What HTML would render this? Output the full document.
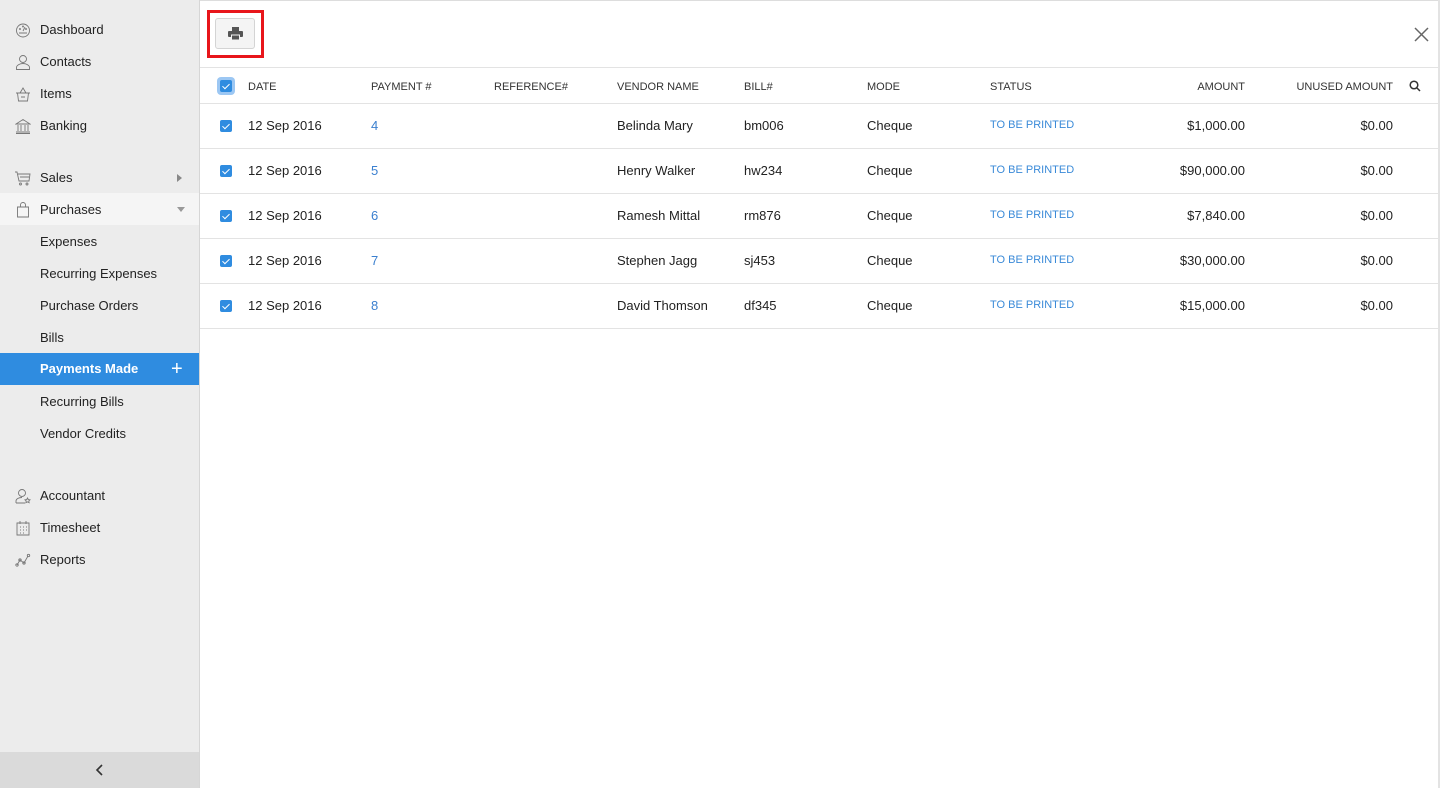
<!DOCTYPE html>
<html><head><meta charset="utf-8"><style>
*{box-sizing:border-box;margin:0;padding:0}
body{width:1440px;height:788px;font-family:"Liberation Sans",sans-serif;color:#222;background:#fff;position:relative;overflow:hidden;font-size:13px}
#sb{position:absolute;left:0;top:0;width:200px;height:788px;background:#ececec;border-right:1px solid #d6d6d6}
.it{position:absolute;left:0;width:199px;height:32px;line-height:34px;padding-left:40px;font-size:13px;color:#222}
.ic{position:absolute;left:15px;top:9px;width:16px;height:16px}
#bot{position:absolute;left:0;top:752px;width:199px;height:36px;background:#dadada}
#main{position:absolute;left:200px;top:0;right:0;height:788px;border-top:1px solid #ddd}
.h{position:absolute;font-size:11px;color:#333;top:81px}
.c{position:absolute;font-size:13px;color:#222}
.cb{position:absolute;left:220px;width:12px;height:12px;background:#2f8ce0;border-radius:2px}
.cb:after{content:"";position:absolute;left:4px;top:1.5px;width:3px;height:6px;border:solid #fff;border-width:0 1.5px 1.5px 0;transform:rotate(45deg)}
.ln{position:absolute;left:200px;right:0;height:1px;background:#e3e3e3}
.r{text-align:right}
.st{color:#3a8ad8;font-size:11px;margin-top:2px}
.lk{color:#3a7fcf}
svg.ic{stroke:#777;stroke-width:.9}
</style></head><body>
<div id="sb">
<div class="it" style="top:13px"><svg class="ic" viewBox="0 0 16 16" fill="none"><circle cx="8" cy="8.5" r="6.5"/><path d="M4 11h8M8 9l2-4"/><circle cx="5" cy="7" r=".5"/><circle cx="11" cy="7" r=".5"/><circle cx="8" cy="4.5" r=".5"/></svg>Dashboard</div>
<div class="it" style="top:45px"><svg class="ic" viewBox="0 0 16 16" fill="none"><circle cx="8" cy="5" r="3.5"/><path d="M1.5 15.5v-2c0-2 3-4 6.5-4s6.5 2 6.5 4v2z"/></svg>Contacts</div>
<div class="it" style="top:77px"><svg class="ic" viewBox="0 0 16 16" fill="none"><path d="M1 7h14M2.5 7l1 8h9l1-8M5 7l3-5 3 5M6 11h4"/></svg>Items</div>
<div class="it" style="top:109px"><svg class="ic" viewBox="0 0 16 16" fill="none"><path d="M1 6h14L8 1.5zM3 7v6M6 7v6M10 7v6M13 7v6M1 14h14M1 15.5h14"/></svg>Banking</div>
<div class="it" style="top:161px"><svg class="ic" viewBox="0 0 16 16" fill="none"><path d="M0 2h2l2 9h10l1-7H3M5 7h9"/><circle cx="5.5" cy="14" r="1"/><circle cx="12" cy="14" r="1"/></svg>Sales<span style="position:absolute;left:177px;top:13px;border-left:5px solid #888;border-top:4px solid transparent;border-bottom:4px solid transparent"></span></div>
<div class="it" style="top:193px;background:#f5f5f5"><svg class="ic" viewBox="0 0 16 16" fill="none"><path d="M2.5 5h11v10h-11zM5.5 5V3a2.5 2.5 0 015 0v2"/></svg>Purchases<span style="position:absolute;left:177px;top:14px;border-top:5px solid #999;border-left:4px solid transparent;border-right:4px solid transparent"></span></div>
<div class="it" style="top:225px">Expenses</div>
<div class="it" style="top:257px">Recurring Expenses</div>
<div class="it" style="top:289px">Purchase Orders</div>
<div class="it" style="top:321px">Bills</div>
<div class="it" style="top:353px;background:#2f8ce0;color:#fff;font-weight:bold;line-height:32px">Payments Made<span style="position:absolute;left:171px;top:0;font-weight:normal;font-size:20px">+</span></div>
<div class="it" style="top:385px">Recurring Bills</div>
<div class="it" style="top:417px">Vendor Credits</div>
<div class="it" style="top:479px"><svg class="ic" viewBox="0 0 16 16" fill="none"><circle cx="7" cy="5" r="3.5"/><path d="M1 15v-2c0-2 2.5-3.5 6-3.5M10 15H1"/><path d="M12.5 10l.8 1.6 1.7.2-1.2 1.2.3 1.7-1.6-.8-1.6.8.3-1.7-1.2-1.2 1.7-.2z"/></svg>Accountant</div>
<div class="it" style="top:511px"><svg class="ic" viewBox="0 0 16 16" fill="none"><path d="M2 3h12v12H2zM5 1v3M11 1v3M5 7h1M8 7h1M11 7h1M5 10h1M8 10h1M11 10h1M5 13h1M8 13h1"/></svg>Timesheet</div>
<div class="it" style="top:543px"><svg class="ic" viewBox="0 0 16 16" fill="none"><path d="M2 13l3-5 4 3 4-7"/><circle cx="2" cy="13" r="1.2"/><circle cx="5" cy="8" r="1.2"/><circle cx="9" cy="11" r="1.2"/><circle cx="13.5" cy="3.5" r="1.2"/></svg>Reports</div>
<div id="bot"><svg style="position:absolute;left:95px;top:11px" width="10" height="14" viewBox="0 0 10 14" fill="none" stroke="#333" stroke-width="1.6"><path d="M7 2L2 7l5 5"/></svg></div>
</div>
<div id="main"></div>
<div style="position:absolute;left:207px;top:10px;width:57px;height:48px;border:3px solid #e8161b"></div>
<div style="position:absolute;left:215px;top:18px;width:40px;height:31px;background:#f4f4f4;border:1px solid #d4d4d4;border-radius:3px"><svg style="position:absolute;left:12px;top:8px" width="15" height="13" viewBox="0 0 15 13" fill="#555"><rect x="4" y="0" width="7" height="4"/><rect x="0" y="4" width="15" height="6" rx="1"/><rect x="3.5" y="8" width="8" height="5" fill="#555" stroke="#f4f4f4" stroke-width="1"/></svg></div>
<svg style="position:absolute;left:1414px;top:27px" width="15" height="15" viewBox="0 0 15 15" stroke="#666" stroke-width="1.5"><path d="M1 1l13 13M14 1L1 14"/></svg>
<div class="ln" style="top:67px"></div>
<div style="position:absolute;left:217px;top:77px;width:18px;height:18px;border-radius:4px;background:#9cc7f3"></div>
<div class="cb" style="top:80px"></div>
<div class="h" style="left:248px">DATE</div>
<div class="h" style="left:371px">PAYMENT #</div>
<div class="h" style="left:494px">REFERENCE#</div>
<div class="h" style="left:617px">VENDOR NAME</div>
<div class="h" style="left:744px">BILL#</div>
<div class="h" style="left:867px">MODE</div>
<div class="h" style="left:990px">STATUS</div>
<div class="h r" style="left:1145px;width:100px">AMOUNT</div>
<div class="h r" style="left:1263px;width:130px">UNUSED AMOUNT</div>
<svg style="position:absolute;left:1409px;top:80px" width="12" height="12" viewBox="0 0 12 12" fill="none" stroke="#333" stroke-width="1.5"><circle cx="5" cy="5" r="3.8"/><path d="M8 8l3 3"/></svg>
<div class="ln" style="top:103px"></div>

<div class="cb" style="top:120px"></div><div class="c" style="left:248px;top:118px">12 Sep 2016</div><div class="c lk" style="left:371px;top:118px">4</div><div class="c" style="left:617px;top:118px">Belinda Mary</div><div class="c" style="left:744px;top:118px">bm006</div><div class="c" style="left:867px;top:118px">Cheque</div><div class="c st" style="left:990px;top:117px">TO BE PRINTED</div><div class="c r" style="left:1105px;width:140px;top:118px">$1,000.00</div><div class="c r" style="left:1293px;width:100px;top:118px">$0.00</div>
<div class="ln" style="top:148px"></div>
<div class="cb" style="top:165px"></div><div class="c" style="left:248px;top:163px">12 Sep 2016</div><div class="c lk" style="left:371px;top:163px">5</div><div class="c" style="left:617px;top:163px">Henry Walker</div><div class="c" style="left:744px;top:163px">hw234</div><div class="c" style="left:867px;top:163px">Cheque</div><div class="c st" style="left:990px;top:162px">TO BE PRINTED</div><div class="c r" style="left:1105px;width:140px;top:163px">$90,000.00</div><div class="c r" style="left:1293px;width:100px;top:163px">$0.00</div>
<div class="ln" style="top:193px"></div>
<div class="cb" style="top:210px"></div><div class="c" style="left:248px;top:208px">12 Sep 2016</div><div class="c lk" style="left:371px;top:208px">6</div><div class="c" style="left:617px;top:208px">Ramesh Mittal</div><div class="c" style="left:744px;top:208px">rm876</div><div class="c" style="left:867px;top:208px">Cheque</div><div class="c st" style="left:990px;top:207px">TO BE PRINTED</div><div class="c r" style="left:1105px;width:140px;top:208px">$7,840.00</div><div class="c r" style="left:1293px;width:100px;top:208px">$0.00</div>
<div class="ln" style="top:238px"></div>
<div class="cb" style="top:255px"></div><div class="c" style="left:248px;top:253px">12 Sep 2016</div><div class="c lk" style="left:371px;top:253px">7</div><div class="c" style="left:617px;top:253px">Stephen Jagg</div><div class="c" style="left:744px;top:253px">sj453</div><div class="c" style="left:867px;top:253px">Cheque</div><div class="c st" style="left:990px;top:252px">TO BE PRINTED</div><div class="c r" style="left:1105px;width:140px;top:253px">$30,000.00</div><div class="c r" style="left:1293px;width:100px;top:253px">$0.00</div>
<div class="ln" style="top:283px"></div>
<div class="cb" style="top:300px"></div><div class="c" style="left:248px;top:298px">12 Sep 2016</div><div class="c lk" style="left:371px;top:298px">8</div><div class="c" style="left:617px;top:298px">David Thomson</div><div class="c" style="left:744px;top:298px">df345</div><div class="c" style="left:867px;top:298px">Cheque</div><div class="c st" style="left:990px;top:297px">TO BE PRINTED</div><div class="c r" style="left:1105px;width:140px;top:298px">$15,000.00</div><div class="c r" style="left:1293px;width:100px;top:298px">$0.00</div>
<div class="ln" style="top:328px"></div>
<div style="position:absolute;right:0;top:0;width:2px;height:788px;background:#e3e3e3"></div>
</body></html>
